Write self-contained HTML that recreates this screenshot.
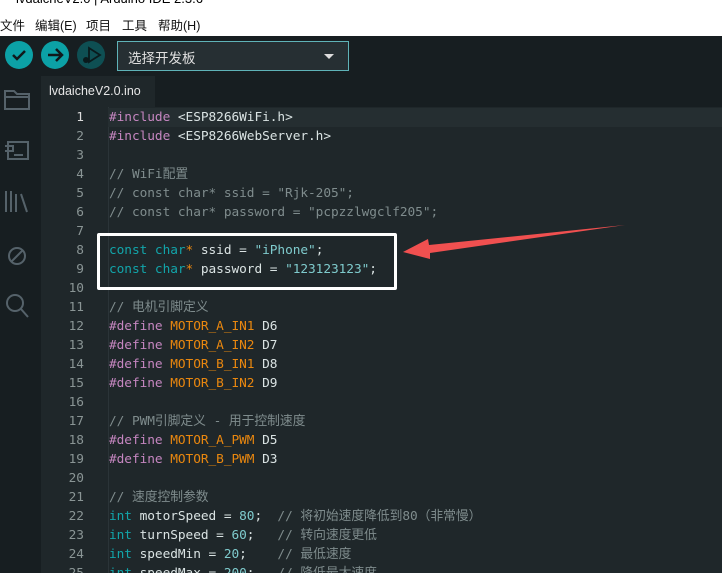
<!DOCTYPE html>
<html><head><meta charset="utf-8"><style>
*{margin:0;padding:0;box-sizing:border-box}
html,body{width:722px;height:573px;overflow:hidden}
body{background:#1f272a;position:relative;font-family:"Liberation Sans","Noto Sans CJK SC",sans-serif}
.title{position:absolute;left:0;top:0;width:722px;height:9px;background:#fff;overflow:hidden}
.title span{position:absolute;left:16px;top:-9px;font-size:13px;color:#000}
.menu{position:absolute;left:0;top:9px;width:722px;height:27px;background:#fff;font-size:12.5px;color:#111}
.menu span{position:absolute;top:6px}
.tool{position:absolute;left:0;top:36px;width:722px;height:40px;background:#171e21}
.btn{position:absolute;top:5px;width:28px;height:28px;border-radius:50%;background:#0ca1a6}
.sel{position:absolute;left:117px;top:5px;width:232px;height:30px;border:1px solid #5fb3b8;background:#262f33;color:#e0e0e0;font-size:13.5px;padding:5px 10px}
.side{position:absolute;left:0;top:76px;width:41px;height:497px;background:#171e21}
.tabbar{position:absolute;left:41px;top:76px;width:681px;height:31px;background:#171e21}
.tab{position:absolute;left:0;top:0;width:114px;height:31px;background:#1f272a;color:#e6e6e6;font-size:12.5px;padding:8px 8px}
.gut{position:absolute;left:41px;top:107px;width:67px;height:466px;background:#1f272a}
.code{position:absolute;left:0;top:108px;width:722px;font-family:"DejaVu Sans Mono","Noto Sans CJK SC",monospace;font-size:12.8px;color:#dae3e3}
.l{height:19px;line-height:19px;position:relative;white-space:pre}
.n{position:absolute;left:41px;width:43px;text-align:right;color:#8a9595}
.t{position:absolute;left:109px;letter-spacing:-0.05px}
.k{color:#c586c0}.c{color:#7f8c8d}.b{color:#12a5aa}.o{color:#e9870f}.s{color:#7fcbcd}.nn{color:#7fcbcd}
</style></head><body>
<div class="title"><span>lvdaicheV2.0 | Arduino IDE 2.3.6</span></div>
<div class="menu"><span style="left:0">文件</span><span style="left:35px">编辑(E)</span><span style="left:86px">项目</span><span style="left:122px">工具</span><span style="left:158px">帮助(H)</span></div>
<div class="tool">
<div class="btn" style="left:5px"><svg width="28" height="28"><path d="M8 14l4 4 8-8" stroke="#10181b" stroke-width="2.5" fill="none"/></svg></div>
<div class="btn" style="left:41px"><svg width="28" height="28"><path d="M7 14h13M15 8l6 6-6 6" stroke="#10181b" stroke-width="2.5" fill="none"/></svg></div>
<div class="btn" style="left:77px;background:#0e4f53"><svg width="28" height="28"><path d="M12 7l11 7-11 7z" stroke="#0a1a1c" stroke-width="1.8" fill="none"/><circle cx="9" cy="19" r="3" fill="#0a1a1c"/></svg></div>
<div class="sel">选择开发板<span style="position:absolute;right:14px;top:12px;border:5px solid transparent;border-top:5px solid #ddd;border-bottom:0"></span></div>
</div>
<div class="side">
<svg width="41" height="260" fill="none" stroke="#55626a" stroke-width="2">
<path d="M5 15h9l3 3h12v15H5z M5 21h24"/>
<path d="M8 66h20v17H8z M5 70h8v5H5 M14 79h9"/>
<path d="M6 115V136M11 115V136M16 118V136M21 118l6 18"/>
<circle cx="17" cy="180" r="8"/><path d="M11 186l12-12"/>
<circle cx="15" cy="227" r="8"/><path d="M21 233l7 8"/>
</svg>
</div>
<div class="tabbar"><div class="tab">lvdaicheV2.0.ino</div></div>
<div class="gut"></div>
<div style="position:absolute;left:108px;top:107px;width:1px;height:466px;background:#2b3438"></div>
<div style="position:absolute;left:108px;top:108px;width:614px;height:19px;background:#252e31"></div>
<div class="code">
<div class="l"><span class="n" style="color:#ddd">1</span><span class="t"><span class="k">#include</span> &lt;ESP8266WiFi.h&gt;</span></div>
<div class="l"><span class="n">2</span><span class="t"><span class="k">#include</span> &lt;ESP8266WebServer.h&gt;</span></div>
<div class="l"><span class="n">3</span></div>
<div class="l"><span class="n">4</span><span class="t c">// WiFi配置</span></div>
<div class="l"><span class="n">5</span><span class="t c">// const char* ssid = "Rjk-205";</span></div>
<div class="l"><span class="n">6</span><span class="t c">// const char* password = "pcpzzlwgclf205";</span></div>
<div class="l"><span class="n">7</span></div>
<div class="l"><span class="n">8</span><span class="t"><span class="b">const char</span><span class="o">*</span> ssid = <span class="s">"iPhone"</span>;</span></div>
<div class="l"><span class="n">9</span><span class="t"><span class="b">const char</span><span class="o">*</span> password = <span class="s">"123123123"</span>;</span></div>
<div class="l"><span class="n">10</span></div>
<div class="l"><span class="n">11</span><span class="t c">// 电机引脚定义</span></div>
<div class="l"><span class="n">12</span><span class="t"><span class="k">#define</span> <span class="o">MOTOR_A_IN1</span> D6</span></div>
<div class="l"><span class="n">13</span><span class="t"><span class="k">#define</span> <span class="o">MOTOR_A_IN2</span> D7</span></div>
<div class="l"><span class="n">14</span><span class="t"><span class="k">#define</span> <span class="o">MOTOR_B_IN1</span> D8</span></div>
<div class="l"><span class="n">15</span><span class="t"><span class="k">#define</span> <span class="o">MOTOR_B_IN2</span> D9</span></div>
<div class="l"><span class="n">16</span></div>
<div class="l"><span class="n">17</span><span class="t c">// PWM引脚定义 - 用于控制速度</span></div>
<div class="l"><span class="n">18</span><span class="t"><span class="k">#define</span> <span class="o">MOTOR_A_PWM</span> D5</span></div>
<div class="l"><span class="n">19</span><span class="t"><span class="k">#define</span> <span class="o">MOTOR_B_PWM</span> D3</span></div>
<div class="l"><span class="n">20</span></div>
<div class="l"><span class="n">21</span><span class="t c">// 速度控制参数</span></div>
<div class="l"><span class="n">22</span><span class="t"><span class="b">int</span> motorSpeed = <span class="nn">80</span>;  <span class="c">// 将初始速度降低到80（非常慢）</span></span></div>
<div class="l"><span class="n">23</span><span class="t"><span class="b">int</span> turnSpeed = <span class="nn">60</span>;   <span class="c">// 转向速度更低</span></span></div>
<div class="l"><span class="n">24</span><span class="t"><span class="b">int</span> speedMin = <span class="nn">20</span>;    <span class="c">// 最低速度</span></span></div>
<div class="l"><span class="n">25</span><span class="t"><span class="b">int</span> speedMax = <span class="nn">200</span>;   <span class="c">// 降低最大速度</span></span></div>
</div>
<div style="position:absolute;left:97px;top:233px;width:300px;height:57px;border:3px solid #fff;border-radius:2px"></div>
<svg style="position:absolute;left:0;top:0" width="722" height="573"><path d="M403 252L428 239L429 245L625 225L430 253L430 259Z" fill="#f05050"/></svg>
</body></html>
